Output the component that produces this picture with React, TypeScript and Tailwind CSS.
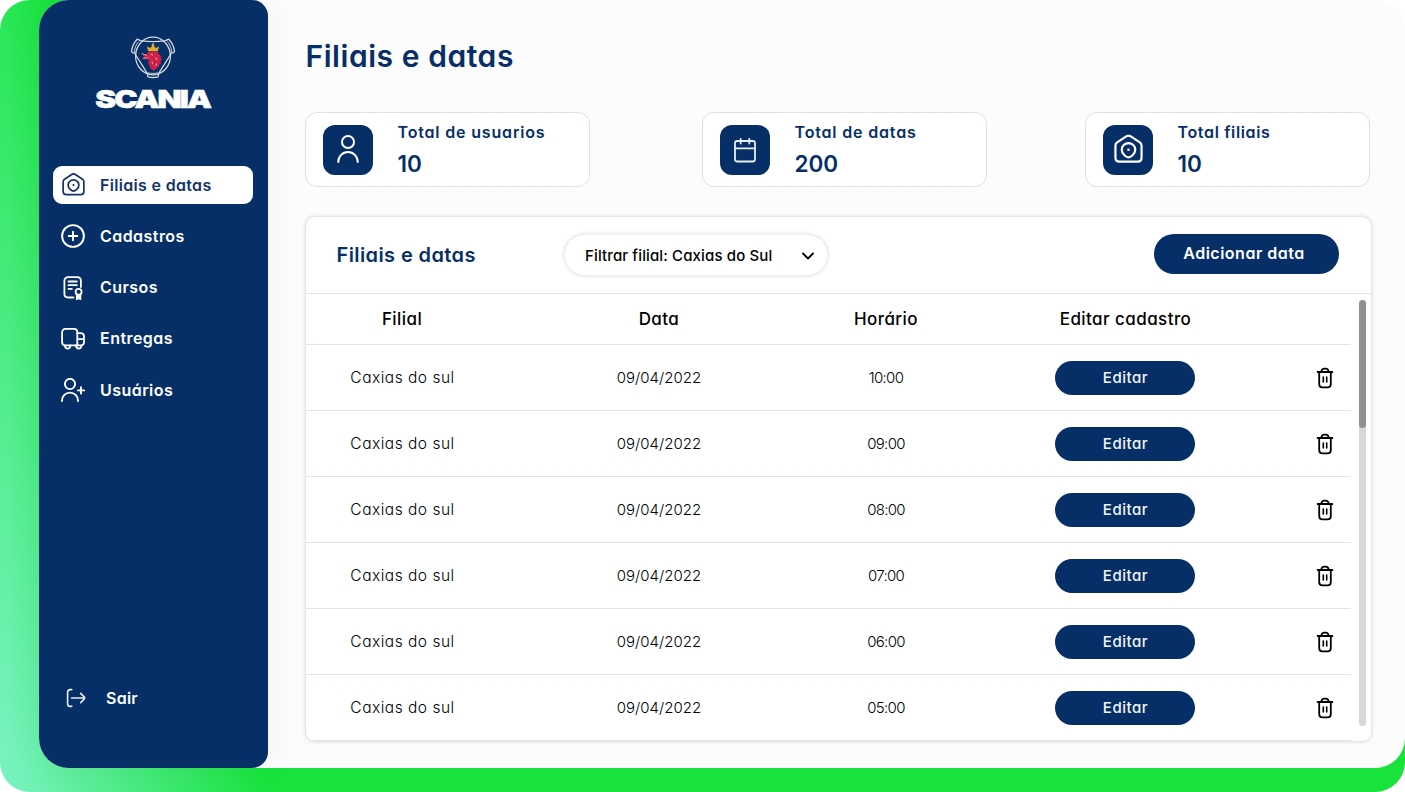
import type { ReactNode } from "react";

type IconProps = { className?: string; strokeWidth?: number };

function HomePinIcon({ className, strokeWidth = 1.8 }: IconProps) {
  return (
    <svg viewBox="0 0 24 24" className={className} fill="none" stroke="currentColor" strokeWidth={strokeWidth} strokeLinecap="round" strokeLinejoin="round">
      <path d="M1.2 9.1c0-1.1.5-2 1.4-2.6l7.5-5c1.2-.75 2.600-.75 3.800 0l7.500 5c.9.6 1.400 1.500 1.400 2.600v10.200c0 1.900-1.300 3.200-3.200 3.200H4.400c-1.900 0-3.200-1.300-3.200-3.200z" />
      <path d="M12 18.900c-1.600 0-5.600-2.700-5.600-6.200a5.600 5.600 0 0 1 11.200 0c0 3.500-4 6.200-5.600 6.200z" />
      <circle cx="12" cy="12.600" r="1.100" fill="currentColor" stroke="none" />
    </svg>
  );
}

function PlusCircleIcon({ className }: IconProps) {
  return (
    <svg viewBox="0 0 24 24" className={className} fill="none" stroke="currentColor" strokeWidth="1.900" strokeLinecap="round">
      <circle cx="12" cy="12" r="10.900" />
      <path d="M12 7.700v8.600M7.700 12h8.600" />
    </svg>
  );
}

function CertificateIcon({ className }: IconProps) {
  return (
    <svg viewBox="0 0 24 24" className={className} fill="none" stroke="currentColor" strokeWidth="1.800" strokeLinecap="round" strokeLinejoin="round">
      <path d="M12.500 21.500H7.200c-2.200 0-3.800-1.500-3.800-3.700V4.900c0-2.200 1.600-3.700 3.800-3.700h8.900c2.200 0 3.800 1.500 3.800 3.700v6.200" />
      <path d="M7.500 5.500h8.300M7.500 9.200h8.300M7.500 12.900h3.300" />
      <circle cx="17.600" cy="15.800" r="3" />
      <path d="M15.800 18.400v4.800l1.800-1.200 1.800 1.200v-4.800" fill="currentColor" />
    </svg>
  );
}

function TruckIcon({ className }: IconProps) {
  return (
    <svg viewBox="0 0 24 24" className={className} fill="none" stroke="currentColor" strokeWidth="1.800" strokeLinecap="round" strokeLinejoin="round">
      <path d="M3.600 18.300c-1.500-.3-2.500-1.500-2.500-3.100V5.300c0-2 1.400-3.400 3.400-3.400h8.400c2 0 3.400 1.400 3.400 3.400v13H9.400" />
      <path d="M16.300 6.200h3.300c2 0 3.400 1.400 3.400 3.300v5.600c0 1.700-.9 2.900-2.200 3.200M16.300 12.100H23" />
      <path d="M3.900 18.300h5.500a2.700 3.200 0 0 1-5.500 0zM15 18.300h5.500a2.700 3.200 0 0 1-5.500 0z" />
    </svg>
  );
}

function UserPlusIcon({ className }: IconProps) {
  return (
    <svg viewBox="0 0 24 24" className={className} fill="none" stroke="currentColor" strokeWidth="1.900" strokeLinecap="round">
      <circle cx="9" cy="6" r="5.100" />
      <path d="M1 23v-.4a8 8 0 0 1 16 0v.4" />
      <path d="M20 9.300v6.200M16.900 12.400h6.200" />
    </svg>
  );
}

function LogoutIcon({ className }: IconProps) {
  return (
    <svg viewBox="0 0 20 20" className={className} fill="none" stroke="currentColor" strokeWidth="1.600" strokeLinecap="round" strokeLinejoin="round">
      <path d="M5.800 1.600H4.300c-1.600 0-2.700 1.100-2.700 2.700v11.400c0 1.600 1.100 2.700 2.700 2.700h1.500" />
      <path d="M5.500 10h13M14.700 5.400l3.400 3.500c.7.700.7 1.500 0 2.200l-3.400 3.500" />
    </svg>
  );
}

function UserIcon({ className }: IconProps) {
  return (
    <svg viewBox="0 0 28 28" className={className} fill="none" stroke="currentColor" strokeWidth="2" strokeLinecap="round">
      <circle cx="14" cy="7" r="6" />
      <path d="M4.300 27v-.3a9.700 9.700 0 0 1 19.400 0v.3" />
    </svg>
  );
}

function CalendarIcon({ className }: IconProps) {
  return (
    <svg viewBox="0 0 24 26" className={className} fill="none" stroke="currentColor" strokeWidth="1.800" strokeLinecap="round">
      <rect x="2" y="4" width="20" height="20.500" rx="2.200" />
      <path d="M2 11.300h20M7.700 2v4.500M16.300 2v4.500" />
    </svg>
  );
}

function TrashIcon({ className }: IconProps) {
  return (
    <svg viewBox="0 0 18 22" className={className} fill="none" stroke="currentColor" strokeWidth="1.800" strokeLinecap="round" strokeLinejoin="round">
      <path d="M1.600 5h14.800M3.200 5v12c0 2 1.400 3.400 3.300 3.400h5c1.900 0 3.300-1.400 3.300-3.400V5" />
      <path d="M5.300 4.700c.3-2 1.400-3 3.100-3h1.200c1.700 0 2.800 1 3.100 3" />
      <path d="M7.300 10v5M10.700 10v5" strokeWidth="1.600" />
    </svg>
  );
}

function ScaniaLogo() {
  return (
    <svg viewBox="0 0 120 80" className="h-[80px] w-[120px]" role="img">
      <g fill="none" stroke="#d5d9df" strokeLinejoin="round">
        <ellipse cx="60" cy="21" rx="17.400" ry="18.800" strokeWidth="1.300" />
        <path d="M47.500 5.600c8.500 1.500 16.500 1.500 25 0M47.500 5.600l-3.300-1.400c-3.100 3-5 7-5.700 12.300l1 1.200 2 .3 12.800 20.300.7 3.500c3.300.9 6.700.9 10 0l.7-3.500L78.500 18l2-.3 1-1.200C80.800 11.200 78.900 7.200 75.800 4.200L72.500 5.600" strokeWidth="1.300" />
        <path d="M45.500 6.500c-2.500 3-3.800 6.500-4.300 10.800M74.500 6.500c2.500 3 3.800 6.500 4.300 10.800M55 37.800c3.300.8 6.700.8 10 0" strokeWidth=".9" />
      </g>
      <path d="M55.400 16.600L53.800 11.200l3.200 1.700 1.600-1.200.3-3.200h2.200l.3 3.200 1.600 1.200 3.200-1.700-1.600 5.400c-3-.8-6.200-.8-9.200 0z" fill="#e2aa32" />
      <path d="M55.500 17.300c3.500-1.500 7.300-1.300 9.900.4l1.200 2 2 1.500-.9 1.400 1.200 2.200-1.400 1.200.5 2.500-1.800.9-.1 2.500-2 .3-.7 2.100-1.700.1-1.500 2-.9-2.100-2-.3.3-2.200-2.100-.7 1.200-2.200-2.200-.4 1.700-2-1.900-1.500 2.400-1.300-3.500-.4-3.300.9-1-1.300 2.500-1.300-2-1.600 2.500-.3z" fill="#cf2148" />
      <path d="M48.600 18.500l5 1.900M50.600 23.400l5-.5M57.500 19l2.500 1.300M62.500 22.500l1.600 2.500M59 26.500l.7 2.600M63.500 28.500l-.6 2.500" stroke="#e6cdd8" strokeWidth=".8" fill="none" />
      <text transform="translate(2.300 73.400) scale(1.270 1)" letterSpacing="-1.550" fontFamily="Inter, sans-serif" fontWeight="900" fontSize="24.700" fill="#ffffff" stroke="#ffffff" strokeWidth=".5">SCANIA</text>
    </svg>
  );
}

const NAV: { label: string; icon: ReactNode; active?: boolean }[] = [
  { label: "Filiais e datas", icon: <HomePinIcon className="size-[23px] -translate-y-px" />, active: true },
  { label: "Cadastros", icon: <PlusCircleIcon className="size-[24px]" /> },
  { label: "Cursos", icon: <CertificateIcon className="size-[24px]" /> },
  { label: "Entregas", icon: <TruckIcon className="size-[24px]" /> },
  { label: "Usuários", icon: <UserPlusIcon className="size-[24px]" /> },
];

const STATS: { label: string; value: string; icon: ReactNode }[] = [
  { label: "Total de usuarios", value: "10", icon: <UserIcon className="size-7 -translate-y-px" /> },
  { label: "Total de datas", value: "200", icon: <CalendarIcon className="h-[26px] w-6 text-[#e8edf3]" /> },
  { label: "Total filiais", value: "10", icon: <HomePinIcon className="size-[29px] -translate-y-[0.500px]" /> },
];

const TIMES = ["10:00", "09:00", "08:00", "07:00", "06:00", "05:00"];

function Sidebar() {
  return (
    <aside className="flex w-[228.500px] shrink-0 flex-col rounded-l-[30px] rounded-r-[16px] bg-[#062f67] text-white shadow-[0_0_36px_rgba(0,0,0,0.05)]">
      <div className="flex h-[109px] justify-center pt-[35px]">
        <ScaniaLogo />
      </div>
      <nav className="mt-[57px] flex flex-col gap-[13.250px] pl-[14px]">
        {NAV.map((n) => (
          <a
            key={n.label}
            className={
              n.active
                ? "flex h-[38px] w-[200px] items-center rounded-[9px] bg-white pl-[9px] text-[16px] font-semibold tracking-[0.320px] text-[#143468]"
                : "flex h-[38px] w-[200px] items-center pl-[8px] text-[16px] font-semibold tracking-[0.450px]"
            }
          >
            <span className={n.active ? "flex w-[38px] shrink-0 items-center" : "flex w-[39px] shrink-0 items-center"}>{n.icon}</span>
            <span className="pb-px">{n.label}</span>
          </a>
        ))}
      </nav>
      <a className="mt-auto mb-[58px] flex h-6 items-center pl-[27px] text-[16px] font-semibold tracking-[0.250px]">
        <LogoutIcon className="mr-5 size-5 text-[#e9eef3]" />
        <span className="pb-px">Sair</span>
      </a>
    </aside>
  );
}

export default function App() {
  return (
    <div className="h-[792px] w-[1405px] overflow-hidden bg-white font-['Inter',sans-serif] [font-feature-settings:'cv11']">
      <div className="h-full overflow-hidden rounded-[30px] bg-[linear-gradient(#fcfcfc,#fcfcfc),linear-gradient(74.500deg,#76f2bd_1.200%,#17e33c_16.800%)] bg-[length:60px_60px,100%_100%] bg-[position:right_top,left_top] bg-no-repeat pb-6 pl-[39px]">
        <div className="flex h-[768px] rounded-l-[30px] rounded-br-[30px] bg-[#fcfcfc]">
          <Sidebar />
          <main className="flex flex-1 flex-col pt-[38px] pl-[37.500px]">
            <h1 className="h-[36px] pl-[0.500px] text-[30px] leading-[36px] font-semibold tracking-[0.560px] text-[#062f67]">Filiais e datas</h1>
            <div className="mt-[38px] flex w-[1065px]">
              {STATS.map((s, i) => (
                <section
                  key={s.label}
                  className={`flex h-[75px] w-[285px] shrink-0 items-center rounded-xl border border-[#dfe0e8] bg-white pl-[17px] text-[#062f67] ${i === 1 ? "ml-[112px]" : i === 2 ? "ml-[98px]" : ""}`}
                >
                  <div className="flex size-[50px] items-center justify-center rounded-xl bg-[#062f67] text-white">{s.icon}</div>
                  <div className="ml-[24.500px] pt-[3px]">
                    <div className={i === 2 ? "text-[16px] leading-6 font-semibold tracking-[0.650px]" : "text-[16px] leading-6 font-semibold tracking-[0.830px]"}>{s.label}</div>
                    <div className="mt-[2px] text-[22.500px] leading-9 font-semibold">{s.value}</div>
                  </div>
                </section>
              ))}
            </div>

            <section className="mt-[29px] flex h-[526px] w-[1067px] flex-col overflow-hidden rounded-[10px] border border-[#e5e5e6] bg-white shadow-[0_0_4px_rgba(0,0,0,0.12)]">
              <header className="flex h-[77px] shrink-0 items-center border-b border-[#e2e3e4] pl-[30.500px]">
                <h2 className="w-[227.500px] text-[20px] font-semibold tracking-[0.400px] text-[#062f67]">Filiais e datas</h2>
                <button className="flex h-[42px] w-[264px] items-center justify-between rounded-full border border-[#ededee] bg-white pr-[12.500px] pl-[20px] text-[15px] font-medium tracking-[0.130px] text-black shadow-[0_0_4px_rgba(0,0,0,0.13)]">
                  <span className="pt-[2px]">Filtrar filial: Caxias do Sul</span>
                  <svg viewBox="0 0 14 14" className="mt-[2px] size-[14px]" fill="none" stroke="currentColor" strokeWidth="1.800" strokeLinecap="round" strokeLinejoin="round">
                    <path d="M2 4.500l5 5 5-5" />
                  </svg>
                </button>
                <button className="mb-[2px] ml-[326px] h-10 w-[185px] rounded-full bg-[#062f67] pr-[5px] pb-[2px] text-[16px] font-semibold tracking-[0.500px] text-white">Adicionar data</button>
              </header>
              <div className="flex">
                <div className="w-[1045px] text-black">
                  <div className="grid h-[51px] grid-cols-[192px_322px_132px_347px_52px] items-center border-b border-[#e2e3e4] pt-[2px] text-center text-[17px] font-medium tracking-[0.430px]">
                    <span>Filial</span>
                    <span>Data</span>
                    <span>Horário</span>
                    <span>Editar cadastro</span>
                  </div>
                  {TIMES.map((t) => (
                    <div key={t} className="grid h-[66px] grid-cols-[192px_322px_132px_347px_52px] items-center border-b border-[#e2e3e4] text-center text-[15px] font-[350]">
                      <span className="pl-px text-[15.500px] tracking-[0.500px]">Caxias do sul</span>
                      <span className="pt-[2px]">09/04/2022</span>
                      <span className="pt-[2px] tracking-[-0.700px]">{t}</span>
                      <span className="flex justify-center pr-px">
                        <button className="h-[34px] w-[140px] rounded-full bg-[#062f67] pt-px pl-px text-[15px] font-medium tracking-[0.550px] text-[#f3f5f8]">Editar</button>
                      </span>
                      <TrashIcon className="ml-[17px] h-[22px] w-[18px]" />
                    </div>
                  ))}
                </div>
                <div className="mt-[6px] ml-[8px] h-[426px] w-[7px] rounded-full bg-[#d8d8d8]">
                  <div className="h-[128px] rounded-full bg-[#909090]" />
                </div>
              </div>
            </section>
          </main>
        </div>
      </div>
    </div>
  );
}
